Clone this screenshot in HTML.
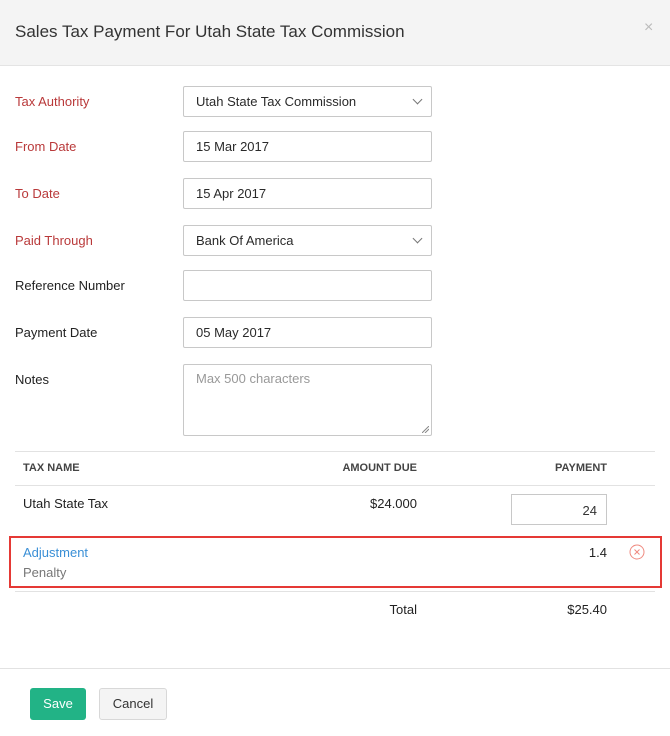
<!DOCTYPE html>
<html><head><style>
*{box-sizing:border-box;margin:0;padding:0}
body{width:670px;height:736px;background:#fff;font-family:"Liberation Sans",sans-serif;font-size:13px;color:#222;position:relative;overflow:hidden}
.a{position:absolute}
.hdr{left:0;top:0;width:670px;height:66px;background:#f4f4f4;border-bottom:1px solid #e4e4e4}
.lbl{left:15px;font-size:13px}
.red{color:#b9393a}
.inp{left:183px;width:249px;height:31px;border:1px solid #c8c8c8;border-radius:2px;padding:0 12px;line-height:29px;font-size:13px;color:#2a2a2a}
.chev{position:absolute;right:10px;top:9px;width:7px;height:7px;border-right:1.2px solid #777;border-bottom:1.2px solid #777;transform:rotate(45deg)}
.line{height:1px;background:#e2e2e2}
.th{font-size:11px;font-weight:bold;color:#444;top:462px}
</style></head><body>
<div class="a hdr"></div>
<div class="a" style="left:15px;top:22px;font-size:17px;color:#333">Sales Tax Payment For Utah State Tax Commission</div>
<div class="a" style="left:644px;top:19px;font-size:16px;color:#bbb">×</div>

<div class="a lbl red" style="top:94px">Tax Authority</div>
<div class="a inp" style="top:86px">Utah State Tax Commission<span class="chev"></span></div>
<div class="a lbl red" style="top:139px">From Date</div>
<div class="a inp" style="top:131px">15 Mar 2017</div>
<div class="a lbl red" style="top:186px">To Date</div>
<div class="a inp" style="top:178px">15 Apr 2017</div>
<div class="a lbl red" style="top:233px">Paid Through</div>
<div class="a inp" style="top:225px">Bank Of America<span class="chev"></span></div>
<div class="a lbl" style="top:278px">Reference Number</div>
<div class="a inp" style="top:270px"></div>
<div class="a lbl" style="top:372px">Notes</div>
<div class="a lbl" style="top:325px">Payment Date</div>
<div class="a inp" style="top:317px">05 May 2017</div>
<div class="a inp" style="top:364px;height:72px;color:#999;line-height:28px;padding-top:0">Max 500 characters
<svg style="position:absolute;right:2px;bottom:2px" width="7" height="7"><path d="M0 7L7 0M3 7L7 3" stroke="#888" stroke-width="1"/></svg></div>

<div class="a line" style="left:15px;width:640px;top:451px"></div>
<div class="a th" style="left:23px">TAX NAME</div>
<div class="a th" style="left:300px;width:117px;text-align:right">AMOUNT DUE</div>
<div class="a th" style="left:500px;width:107px;text-align:right">PAYMENT</div>
<div class="a line" style="left:15px;width:640px;top:485px"></div>
<div class="a" style="left:23px;top:496px">Utah State Tax</div>
<div class="a" style="left:300px;width:117px;text-align:right;top:496px">$24.000</div>
<div class="a" style="left:511px;top:494px;width:96px;height:31px;border:1px solid #c8c8c8;text-align:right;padding-right:9px;line-height:31px;color:#333">24</div>

<div class="a" style="left:9px;top:536px;width:653px;height:52px;border:2px solid #e53935"></div>
<div class="a" style="left:23px;top:545px;color:#3a8fd6">Adjustment</div>
<div class="a" style="left:23px;top:565px;color:#777">Penalty</div>
<div class="a" style="left:500px;width:107px;text-align:right;top:545px">1.4</div>
<svg class="a" style="left:629px;top:544px" width="16" height="16" viewBox="0 0 16 16"><circle cx="8" cy="8" r="7" fill="none" stroke="#ef8a80" stroke-width="1"/><path d="M5.5 5.5L10.5 10.5M10.5 5.5L5.5 10.5" stroke="#ef8a80" stroke-width="1"/></svg>
<div class="a line" style="left:15px;width:640px;top:591px"></div>
<div class="a" style="left:300px;width:117px;text-align:right;top:602px">Total</div>
<div class="a" style="left:500px;width:107px;text-align:right;top:602px">$25.40</div>

<div class="a line" style="left:0;width:670px;top:668px"></div>
<div class="a" style="left:30px;top:688px;width:56px;height:32px;background:#22b386;color:#fff;border-radius:3px;text-align:center;line-height:32px">Save</div>
<div class="a" style="left:99px;top:688px;width:68px;height:32px;background:#f4f4f4;border:1px solid #d8d8d8;border-radius:3px;text-align:center;line-height:30px;color:#333">Cancel</div>
</body></html>
